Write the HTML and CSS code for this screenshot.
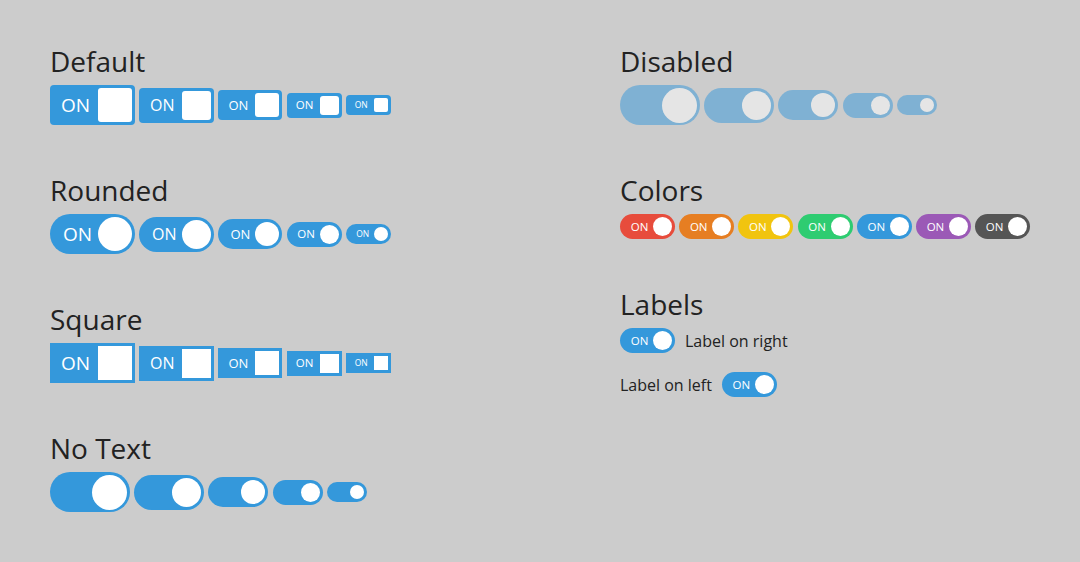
FILE: index.html
```html
<!DOCTYPE html>
<html>
<head>
<meta charset="utf-8">
<link rel="stylesheet" href="styles.css">
</head>
<body>
<div class="page">
  <div class="col col-left">
    <section class="section">
      <h2 class="title">Default</h2>
      <div class="row">
        <span class="sw s1"><span class="lbl">ON</span><span class="knob"></span></span>
        <span class="sw s2"><span class="lbl">ON</span><span class="knob"></span></span>
        <span class="sw s3"><span class="lbl">ON</span><span class="knob"></span></span>
        <span class="sw s4"><span class="lbl">ON</span><span class="knob"></span></span>
        <span class="sw s5"><span class="lbl">ON</span><span class="knob"></span></span>
      </div>
    </section>
    <section class="section">
      <h2 class="title">Rounded</h2>
      <div class="row">
        <span class="sw s1 round"><span class="lbl">ON</span><span class="knob"></span></span>
        <span class="sw s2 round"><span class="lbl">ON</span><span class="knob"></span></span>
        <span class="sw s3 round"><span class="lbl">ON</span><span class="knob"></span></span>
        <span class="sw s4 round"><span class="lbl">ON</span><span class="knob"></span></span>
        <span class="sw s5 round"><span class="lbl">ON</span><span class="knob"></span></span>
      </div>
    </section>
    <section class="section">
      <h2 class="title">Square</h2>
      <div class="row">
        <span class="sw s1 square"><span class="lbl">ON</span><span class="knob"></span></span>
        <span class="sw s2 square"><span class="lbl">ON</span><span class="knob"></span></span>
        <span class="sw s3 square"><span class="lbl">ON</span><span class="knob"></span></span>
        <span class="sw s4 square"><span class="lbl">ON</span><span class="knob"></span></span>
        <span class="sw s5 square"><span class="lbl">ON</span><span class="knob"></span></span>
      </div>
    </section>
    <section class="section">
      <h2 class="title">No Text</h2>
      <div class="row">
        <span class="sw s1 round notext"><span class="knob"></span></span>
        <span class="sw s2 round notext"><span class="knob"></span></span>
        <span class="sw s3 round notext"><span class="knob"></span></span>
        <span class="sw s4 round notext"><span class="knob"></span></span>
        <span class="sw s5 round notext"><span class="knob"></span></span>
      </div>
    </section>
  </div>
  <div class="col col-right">
    <section class="section">
      <h2 class="title">Disabled</h2>
      <div class="row">
        <span class="sw s1 round notext disabled"><span class="knob"></span></span>
        <span class="sw s2 round notext disabled"><span class="knob"></span></span>
        <span class="sw s3 round notext disabled"><span class="knob"></span></span>
        <span class="sw s4 round notext disabled"><span class="knob"></span></span>
        <span class="sw s5 round notext disabled"><span class="knob"></span></span>
      </div>
    </section>
    <section class="section">
      <h2 class="title">Colors</h2>
      <div class="row">
        <span class="sw s4 round c-red"><span class="lbl">ON</span><span class="knob"></span></span>
        <span class="sw s4 round c-orange"><span class="lbl">ON</span><span class="knob"></span></span>
        <span class="sw s4 round c-yellow"><span class="lbl">ON</span><span class="knob"></span></span>
        <span class="sw s4 round c-green"><span class="lbl">ON</span><span class="knob"></span></span>
        <span class="sw s4 round"><span class="lbl">ON</span><span class="knob"></span></span>
        <span class="sw s4 round c-purple"><span class="lbl">ON</span><span class="knob"></span></span>
        <span class="sw s4 round c-dark"><span class="lbl">ON</span><span class="knob"></span></span>
      </div>
    </section>
    <section class="section">
      <h2 class="title">Labels</h2>
      <div class="label-row">
        <span class="sw s4 round"><span class="lbl">ON</span><span class="knob"></span></span>
        <span class="text">Label on right</span>
      </div>
      <div class="label-row">
        <span class="text">Label on left</span>
        <span class="sw s4 round"><span class="lbl">ON</span><span class="knob"></span></span>
      </div>
    </section>
  </div>
</div>
</body>
</html>
```

FILE: styles.css
```css
html, body {
  margin: 0;
  padding: 0;
  background: #cccccc;
}

body {
  font-family: "Open Sans", "Liberation Sans", sans-serif;
  color: #222222;
}

.page {
  display: flex;
  padding: 42px 0 0 50px;
}

.col-left {
  width: 570px;
}

.col-right {
  flex: 1;
}

.section {
  margin-bottom: 46px;
}

.title {
  margin: 0 0 5px 0;
  font-size: 28px;
  line-height: 38px;
  font-weight: 400;
  color: #222222;
}

.row {
  display: flex;
  align-items: center;
  gap: 4.2px;
}

.sw {
  display: inline-flex;
  align-items: center;
  box-sizing: border-box;
  padding: 3px;
  background: #3498db;
  color: #ffffff;
  border-radius: 4px;
  flex: none;
}

.lbl {
  flex: 1;
  text-align: center;
  line-height: 1;
}

.knob {
  flex: none;
  background: #ffffff;
  border-radius: 3px;
}

.s1 { width: 85px; height: 40px; font-size: 19px; }
.s1 .knob { width: 34px; height: 34px; }
.s2 { width: 75px; height: 35px; font-size: 16px; }
.s2 .knob { width: 29px; height: 29px; }
.s3 { width: 64px; height: 30px; font-size: 13px; font-weight: 500; }
.s3 .knob { width: 24px; height: 24px; }
.s4 { width: 55px; height: 25px; font-size: 11.5px; font-weight: 500; }
.s4 .knob { width: 19px; height: 19px; }
.s5 { width: 45px; height: 20px; font-size: 8.5px; font-weight: 500; }
.s5 .knob { width: 14px; height: 14px; border-radius: 2px; }

.round { border-radius: 999px; }
.round .knob { border-radius: 50%; }
.round .lbl { padding-left: 4px; }
.s4.round .lbl, .s5.round .lbl { padding-left: 3px; }

.square { border-radius: 0; }
.square .knob { border-radius: 0; }

.notext { justify-content: flex-end; }
.notext.s1 { width: 80px; }
.notext.s2 { width: 70px; }
.notext.s3 { width: 60px; }
.notext.s4 { width: 50px; }
.notext.s5 { width: 40px; }
.notext.s1 .knob { width: 35px; height: 35px; }

.disabled { opacity: 0.5; }

.c-red { background: #e74c3c; }
.c-orange { background: #e67e22; }
.c-yellow { background: #f1c40f; }
.c-green { background: #2ecc71; }
.c-purple { background: #9b59b6; }
.c-dark { background: #555555; }

.label-row {
  display: flex;
  align-items: center;
  gap: 10px;
  margin-bottom: 19px;
  font-size: 16px;
  line-height: 22px;
}

.label-row .text {
  color: #222222;
}
```
